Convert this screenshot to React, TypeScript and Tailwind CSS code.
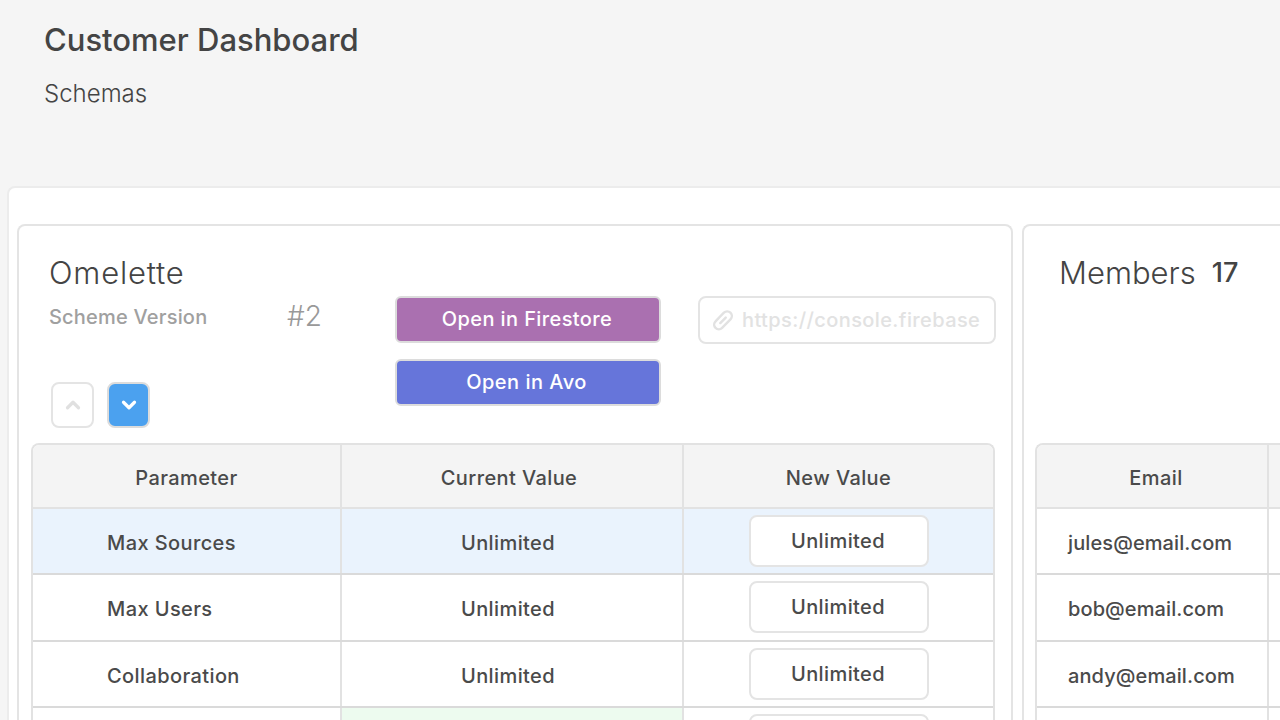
import { ChevronDown, ChevronUp } from "lucide-react";

const paramRows = [
  { name: "Max Sources", current: "Unlimited", value: "Unlimited", rowBg: "bg-[#eaf3fd]", cellBg: "" },
  { name: "Max Users", current: "Unlimited", value: "Unlimited", rowBg: "bg-white", cellBg: "" },
  { name: "Collaboration", current: "Unlimited", value: "Unlimited", rowBg: "bg-white", cellBg: "" },
  { name: "", current: "", value: "", rowBg: "bg-white", cellBg: "bg-[#edfbef]" },
];

const members = ["jules@email.com", "bob@email.com", "andy@email.com", ""];

function ParamTable() {
  return (
    <div className="ml-px w-[964px] rounded-t-lg border-2 border-b-0 border-[#e2e2e2] overflow-hidden">
      <div className="grid grid-cols-[309px_342px_1fr] h-[64px] bg-[#f4f4f4] border-b-2 border-[#e2e2e2] text-[20px] font-medium tracking-[0.4px] text-[#4a4a4a]">
        <div className="flex items-center justify-center pt-[4px] border-r-2 border-[#e2e2e2]">Parameter</div>
        <div className="flex items-center justify-center pt-[4px] pr-[6px] border-r-2 border-[#e2e2e2]">Current Value</div>
        <div className="flex items-center justify-center pt-[4px]">New Value</div>
      </div>
      {paramRows.map((row, i) => (
        <div
          key={i}
          className={`grid grid-cols-[309px_342px_1fr] h-[66.33px] border-b-2 border-[#dadada] text-[20px] font-medium tracking-[0.4px] text-[#4a4a4a] ${row.rowBg}`}
        >
          <div className="flex items-center pl-[74px] pt-[4px] border-r-2 border-[#e2e2e2]">{row.name}</div>
          <div className={`flex items-center justify-center pt-[4px] pr-[8px] border-r-2 border-[#e2e2e2] ${row.cellBg}`}>{row.current}</div>
          <div className="flex justify-center pt-[6px]">
            <div className="flex items-center justify-center pr-[1px] w-[180px] h-[52px] rounded-lg border-2 border-[#e4e4e4] bg-white">
              {row.value}
            </div>
          </div>
        </div>
      ))}
    </div>
  );
}

function MembersTable() {
  return (
    <div className="w-[400px] rounded-tl-lg border-2 border-b-0 border-r-0 border-[#e2e2e2] overflow-hidden">
      <div className="grid grid-cols-[232px_1fr] h-[64px] bg-[#f4f4f4] border-b-2 border-[#e2e2e2] text-[20px] font-medium tracking-[0.4px] text-[#4a4a4a]">
        <div className="flex items-center justify-center pt-[4px] pl-[8px] border-r-2 border-[#e2e2e2]">Email</div>
        <div />
      </div>
      {members.map((email, i) => (
        <div key={i} className="grid grid-cols-[232px_1fr] h-[66.33px] border-b-2 border-[#dadada] bg-white text-[20px] font-medium tracking-[0.1px] text-[#4a4a4a]">
          <div className="flex items-center pl-[31px] pt-[4px] border-r-2 border-[#e2e2e2]">{email}</div>
          <div />
        </div>
      ))}
    </div>
  );
}

export default function App() {
  return (
    <div className="h-[720px] w-[1280px] overflow-hidden bg-[#f5f5f5] font-['Inter',sans-serif]">
      <div className="h-[186px] pl-[44px] pt-[21px]">
        <h1 className="text-[31px] leading-[38px] font-medium text-[#444]">Customer Dashboard</h1>
        <p className="mt-[20px] text-[24px] leading-[30px] font-light text-[#444]">Schemas</p>
      </div>

      <div className="ml-[7px] flex h-[534px] gap-[9px] rounded-tl-lg border-2 border-r-0 border-b-0 border-[#ececec] bg-white pl-[8px] pt-[36px]">
        {/* Omelette card */}
        <div className="w-[996px] shrink-0 rounded-t-lg border-2 border-b-0 border-[#e4e4e4] px-[11px]">
          <div className="flex h-[217px]">
            <div className="w-[365px] shrink-0 pl-[19px] pt-[29px]">
              <h2 className="text-[31px] leading-[36px] font-light tracking-[0.8px] text-[#444]">Omelette</h2>
              <div className="mt-[9px] flex items-center">
                <span className="w-[238px] text-[20px] leading-[34px] font-medium tracking-[0.2px] text-[#a0a0a0]">Scheme Version</span>
                <span className="pb-[2px] text-[28px] leading-[30px] font-light text-[#999]">#2</span>
              </div>
              <div className="mt-[48px] ml-[2px] flex gap-[14px]">
                <button className="flex h-[46px] w-[43px] items-center justify-center rounded-lg border-2 border-[#e4e4e4] bg-white text-[#e0e0e0]">
                  <ChevronUp size={22} strokeWidth={3.5} />
                </button>
                <button className="-ml-px flex h-[46px] w-[43px] items-center justify-center rounded-lg border-2 border-[#dcdcdc] bg-[#4ba1ef] text-white">
                  <ChevronDown size={22} strokeWidth={3.5} />
                </button>
              </div>
            </div>

            <div className="w-[303px] shrink-0 pt-[70px]">
              <button className="flex h-[47px] w-[266px] items-center justify-center pr-[2px] pb-[1px] rounded-md border-2 border-[#dcdcdc] bg-[#aa70b0] text-[20px] font-medium tracking-[0.4px] text-white">
                Open in Firestore
              </button>
              <button className="mt-[16px] flex h-[47px] w-[266px] items-center justify-center pr-[3px] pb-[1px] rounded-md border-2 border-[#dcdcdc] bg-[#6675da] text-[20px] font-medium tracking-[0.5px] text-white">
                Open in Avo
              </button>
            </div>

            <div className="pt-[70px]">
              <div className="flex h-[47.5px] w-[298px] items-center gap-[9px] overflow-hidden rounded-lg border-2 border-[#e4e4e4] pl-[13px] text-[#e2e2e2]">
                <svg width="20" height="22" viewBox="2 2 16.5 18" fill="none" stroke="currentColor" strokeWidth="2" strokeLinecap="round" className="shrink-0">
                  <path d="M7 9 L11 5 a3.8 3.8 0 0 1 5.4 5.4 L9.5 17.5 a3.8 3.8 0 0 1 -5.4 -5.4 L7 9" />
                  <path d="M8 13.5 L12.5 9" />
                </svg>
                <span className="text-[20px] font-medium tracking-[0.4px] whitespace-nowrap">https://console.firebase</span>
              </div>
            </div>
          </div>
          <ParamTable />
        </div>

        {/* Members card */}
        <div className="flex-1 rounded-tl-lg border-2 border-r-0 border-b-0 border-[#e4e4e4] pl-[11px]">
          <div className="h-[217px] pl-[24px] pt-[29px]">
            <div className="flex items-center gap-[16px]">
              <h2 className="text-[31px] leading-[36px] font-light text-[#444]">Members</h2>
              <span className="text-[27px] leading-[36px] font-medium text-[#444]">17</span>
            </div>
          </div>
          <MembersTable />
        </div>
      </div>
    </div>
  );
}
